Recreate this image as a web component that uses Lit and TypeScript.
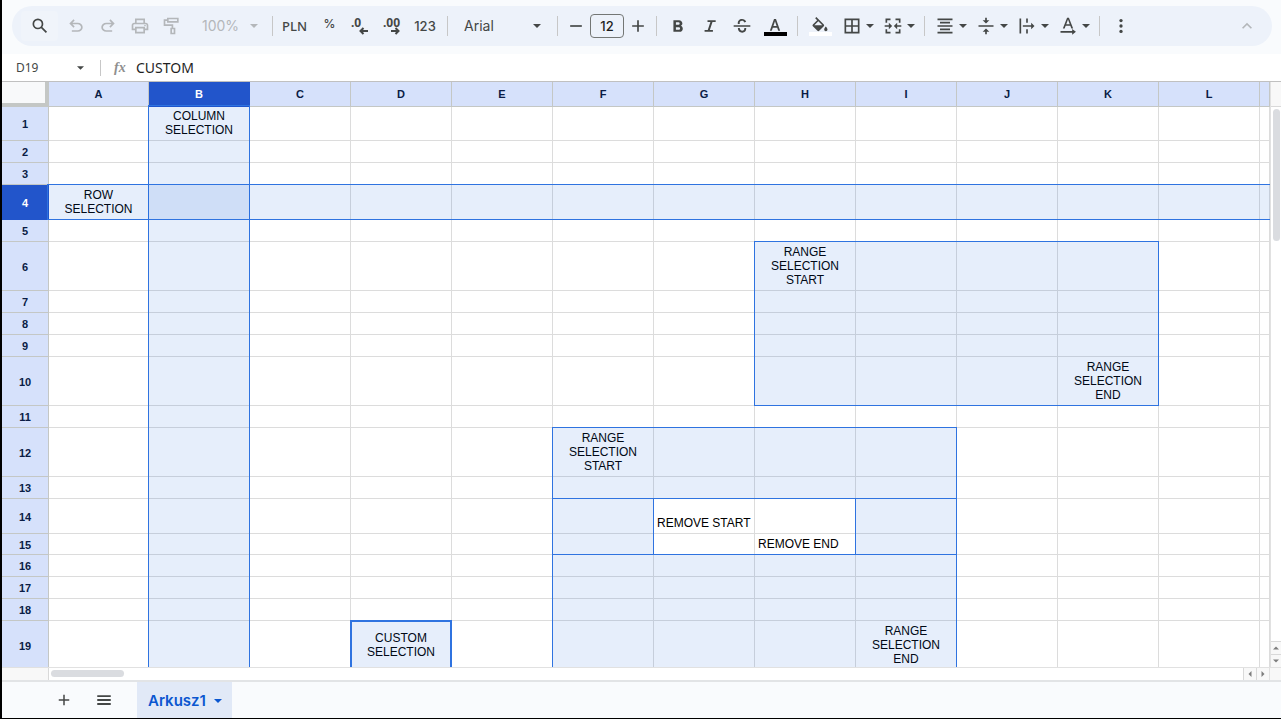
import { LitElement, html, css, svg } from "lit";
import { customElement, state } from "lit/decorators.js";
import { classMap } from "lit/directives/class-map.js";

const COLUMNS = ["A", "B", "C", "D", "E", "F", "G", "H", "I", "J", "K", "L", ""];
const ROW_HEIGHTS = [34, 22, 22, 35, 22, 49, 22, 22, 22, 49, 22, 49, 22, 35, 21, 22, 22, 22, 49];

interface Cell {
  lines: string[];
  look?: string;
}

const CELLS: Record<string, Cell> = {
  B1: { lines: ["COLUMN", "SELECTION"] },
  A4: { lines: ["ROW", "SELECTION"] },
  H6: { lines: ["RANGE", "SELECTION", "START"] },
  K10: { lines: ["RANGE", "SELECTION", "END"] },
  F12: { lines: ["RANGE", "SELECTION", "START"] },
  G14: { lines: ["REMOVE START"], look: "plain" },
  H15: { lines: ["REMOVE END"], look: "plain" },
  D19: { lines: ["CUSTOM", "SELECTION"], look: "middle" },
  I19: { lines: ["RANGE", "SELECTION", "END"] },
};

// Grid lines count the header row and header column as track 1.
interface Range {
  cols: [number, number];
  rows: [number, number];
  kind?: string;
}

const RANGES: Range[] = [
  { cols: [3, 4], rows: [2, 21], kind: "whole-column" },
  { cols: [2, 15], rows: [5, 6], kind: "whole-row" },
  { cols: [9, 13], rows: [7, 12] },
  { cols: [7, 11], rows: [13, 15] },
  { cols: [7, 8], rows: [15, 17] },
  { cols: [10, 11], rows: [15, 17] },
  { cols: [7, 11], rows: [17, 21] },
  { cols: [5, 6], rows: [20, 21], kind: "active" },
];

const SHAPES = {
  search: svg`<path d="M20.49 19l-5.73-5.73C15.53 12.2 16 10.91 16 9.5A6.5 6.5 0 1 0 9.5 16c1.41 0 2.7-.47 3.77-1.24L19 20.49 20.49 19zM5 9.5C5 7.01 7.01 5 9.5 5S14 7.01 14 9.5 11.99 14 9.5 14 5 11.99 5 9.5z"/>`,
  undo: svg`<path d="M7 19v-2h7.1c1.05 0 1.96-.33 2.74-1 .77-.67 1.16-1.5 1.16-2.5s-.39-1.83-1.16-2.5c-.78-.67-1.69-1-2.74-1H7.8l2.6 2.6L9 14 4 9l5-5 1.4 1.4L7.8 8h6.3c1.62 0 3 .53 4.16 1.58C19.42 10.63 20 11.93 20 13.5s-.58 2.88-1.74 3.93C17.1 18.48 15.72 19 14.1 19H7z"/>`,
  redo: svg`<path d="M17 19v-2H9.9c-1.05 0-1.96-.33-2.74-1C6.39 15.33 6 14.5 6 13.5s.39-1.83 1.16-2.5c.78-.67 1.69-1 2.74-1h6.3l-2.6 2.6L15 14l5-5-5-5-1.4 1.4L16.2 8H9.9c-1.62 0-3 .53-4.16 1.58C4.58 10.63 4 11.93 4 13.5s.58 2.88 1.74 3.93C6.9 18.48 8.28 19 9.9 19H17z"/>`,
  print: svg`<path d="M19 8h-1V3H6v5H5c-1.66 0-3 1.34-3 3v6h4v4h12v-4h4v-6c0-1.66-1.34-3-3-3zM8 5h8v3H8V5zm8 14H8v-4h8v4zm2-4v-2H6v2H4v-4c0-.55.45-1 1-1h14c.55 0 1 .45 1 1v4h-2z"/><circle cx="18" cy="11.5" r="1"/>`,
  paint: svg`<path d="M6 2h14v6H6V6H4v4h9.5v4H16v8h-6v-8h1.5v-2H2V4h4V2zm2 2v2h10V4H8zm4 12v4h2v-4h-2z"/>`,
  minus: svg`<path d="M5 11h14v2H5z"/>`,
  plus: svg`<path d="M19 13h-6v6h-2v-6H5v-2h6V5h2v6h6v2z"/>`,
  bold: svg`<path d="M15.6 11.79c.97-.67 1.65-1.77 1.65-2.79 0-2.26-1.75-4-4-4H6.5v14h7.54c2.09 0 3.71-1.7 3.71-3.79 0-1.52-.86-2.82-2.15-3.42zM9.5 7.5h3a1.5 1.5 0 0 1 0 3h-3v-3zm3.5 9H9.5v-3H13a1.5 1.5 0 0 1 0 3z"/>`,
  italic: svg`<path d="M9 5v2.2h3.5L9.3 16.8H5.5V19h10v-2.2h-3.7L15 7.2h3.8V5z"/>`,
  strike: svg`<path d="M2 11h20v2H2zM7 9.5C6.4 5.9 8.9 3.5 12 3.5c2.4 0 4.2 1.2 5 3.3l-2.2.9c-.5-1.3-1.4-2-2.8-2-1.9 0-3.2 1.4-2.7 3.8H7zm0 5h2.3c.2 2 1.3 3.2 3 3.2 1.6 0 2.7-1.2 2.5-3.2h2.3c.2 3.6-1.9 5.6-4.8 5.6-3.2 0-5.2-2.1-5.3-5.6z"/>`,
  textColor: svg`<path d="M10.8 2.5h2.4L18.2 16.5h-2.3l-1.3-3.6H9.4l-1.3 3.6H5.8l5-14zm-.7 8.4h3.8L12 5.2l-1.9 5.7z"/>`,
  fill: svg`<path d="M16.56 8.94L7.62 0 6.21 1.41l2.38 2.38-5.15 5.15a1.49 1.49 0 0 0 0 2.12l5.5 5.5c.29.29.68.44 1.06.44s.77-.15 1.06-.44l5.5-5.5c.59-.58.59-1.53 0-2.12zM5.21 10L10 5.21 14.79 10H5.21zM19 11.5s-2 2.17-2 3.5a2 2 0 0 0 4 0c0-1.33-2-3.5-2-3.5z"/>`,
  borders: svg`<path d="M3 3v18h18V3H3zm8 16H5v-6h6v6zm0-8H5V5h6v6zm8 8h-6v-6h6v6zm0-8h-6V5h6v6z"/>`,
  merge: svg`<path d="M3 3h6v2H5v3H3V3zm12 0h6v5h-2V5h-4V3zM3 16h2v3h4v2H3v-5zm16 0h2v5h-6v-2h4v-3zM2 11h5V8l4 4-4 4v-3H2v-2zm20 0h-5V8l-4 4 4 4v-3h5v-2z"/>`,
  align: svg`<path d="M3 3h18v2H3zM6 7h12v2H6zM3 11h18v2H3zM6 15h12v2H6zM3 19h18v2H3z"/>`,
  valign: svg`<path d="M3 11h18v2H3zM11 2h2v3h3l-4 4-4-4h3V2zm0 20h2v-3h3l-4-4-4 4h3v3z"/>`,
  wrap: svg`<path d="M3 3h2v18H3zM11 3h2v5h-2zM11 16h2v5h-2zM7 11h10V8l4 4-4 4v-3H7v-2z"/>`,
  rotate: svg`<path d="M10.9 2h2.2l5.1 13H16l-1.2-3.2H9.2L8 15H5.8l5.1-13zm-1 7.9h4.2L12 4.2 9.9 9.9zM3 18h14v-2.5l4.5 3.5-4.5 3.5V20H3v-2z"/>`,
  more: svg`<circle cx="12" cy="5.5" r="2"/><circle cx="12" cy="12" r="2"/><circle cx="12" cy="18.5" r="2"/>`,
  collapse: svg`<path d="M12 8l-6 6 1.41 1.41L12 10.83l4.59 4.58L18 14z"/>`,
  list: svg`<path d="M3 5.5h18v2.4H3zM3 10.8h18v2.4H3zM3 16.1h18v2.4H3z"/>`,
};

type ShapeName = keyof typeof SHAPES;

const icon = (name: ShapeName) =>
  html`<svg class="icon" viewBox="0 0 24 24" aria-hidden="true">${SHAPES[name]}</svg>`;

const caret = html`<svg class="caret" viewBox="0 0 8 4" aria-hidden="true"><path d="M0 0h8L4 4z"/></svg>`;

@customElement("sheet-toolbar")
export class SheetToolbar extends LitElement {
  static styles = css`
    :host { display: block; background: #f9fbfd; padding: 6px 9px 8px 10px; }
    .bar {
      display: flex; align-items: center; height: 40px; box-sizing: border-box;
      padding: 0 15px 0 9px; border-radius: 20px; background: #edf2fa; color: #444746;
      font: 500 14px/20px Inter, sans-serif;
    }
    button, select, input { font: inherit; color: inherit; border: 0; background: none; margin: 0; padding: 0; }
    button { display: flex; align-items: center; justify-content: center; flex: none; height: 30px; }
    .tool { width: 32px; }
    .search { width: 37px; margin-right: 2px; background: #f0f4fa; border-radius: 4px; }
    .off { color: #b4b7ba; }
    .icon { width: 20px; height: 20px; fill: currentColor; flex: none; }
    .caret { width: 8px; height: 4px; fill: currentColor; flex: none; }
    .split { width: 41px; gap: 4px; }
    .rule { width: 1px; height: 20px; background: #c7c7c7; flex: none; }
    .rule.wide { margin: 0 5px; }
    .rule.after { margin-right: 5px; }
    .pick { display: flex; align-items: center; flex: none; }
    .pick select { appearance: none; flex: 1; min-width: 0; font-weight: 400; opacity: 1; }
    .zoom { width: 56px; margin: 0 14px; }
    .font { width: 77px; margin: 0 16px; }
    .money { width: 43px; font: 500 13px/20px "Noto Sans", sans-serif; }
    .pct { width: 27px; font-size: 12px; padding-bottom: 4px; }
    .dec { width: 32px; }
    .dec svg { width: 20px; height: 20px; overflow: visible; }
    .dec text { font: 700 12px "Noto Sans", sans-serif; fill: currentColor; }
    .dec path { fill: none; stroke: currentColor; stroke-width: 2; }
    .num { width: 36px; margin-right: 4px; font-size: 13px; }
    .sizes { display: flex; align-items: center; padding: 0 4px; flex: none; }
    .size {
      width: 34px; height: 24px; box-sizing: border-box; border: 1px solid #747775;
      border-radius: 4px; text-align: center; font-size: 13px; color: #1f1f1f;
    }
    .step { width: 28px; }
    .color { flex-direction: column; justify-content: flex-start; width: 34px; padding-top: 6px; }
    .swatch { width: 23px; height: 4px; margin-top: -5px; background: #000; position: relative; }
    .swatch.white { background: #fff; }
    .end { margin-left: auto; }
  `;

  private split(label: string, name: ShapeName) {
    return html`<button class="split" aria-label=${label}>${icon(name)}${caret}</button>`;
  }

  render() {
    return html`
      <div class="bar" role="toolbar" aria-label="Toolbar">
        <button class="search" aria-label="Search">${icon("search")}</button>
        <button class="tool off" aria-label="Undo">${icon("undo")}</button>
        <button class="tool off" aria-label="Redo">${icon("redo")}</button>
        <button class="tool off" aria-label="Print">${icon("print")}</button>
        <button class="tool off" aria-label="Paint format">${icon("paint")}</button>
        <div class="pick zoom off">
          <select aria-label="Zoom" disabled><option>100%</option></select>${caret}
        </div>
        <span class="rule"></span>
        <button class="money">PLN</button>
        <button class="pct">%</button>
        <button class="dec" aria-label="Decrease decimal places">
          <svg viewBox="0 0 20 20"><text x="2" y="11">.0</text><path d="M19 15h-7.5M14.5 12l-3 3 3 3"/></svg>
        </button>
        <button class="dec" aria-label="Increase decimal places">
          <svg viewBox="0 0 20 20"><text x="2" y="11">.00</text><path d="M10 15h7.5M14.5 12l3 3-3 3"/></svg>
        </button>
        <button class="num">123</button>
        <span class="rule"></span>
        <div class="pick font">
          <select aria-label="Font"><option>Arial</option></select>${caret}
        </div>
        <span class="rule"></span>
        <div class="sizes">
          <button class="step" aria-label="Decrease font size">${icon("minus")}</button>
          <input class="size" aria-label="Font size" value="12" />
          <button class="step" aria-label="Increase font size">${icon("plus")}</button>
        </div>
        <span class="rule after"></span>
        <button class="tool" aria-label="Bold">${icon("bold")}</button>
        <button class="tool" aria-label="Italic">${icon("italic")}</button>
        <button class="tool" aria-label="Strikethrough">${icon("strike")}</button>
        <button class="color" aria-label="Text colour">${icon("textColor")}<span class="swatch"></span></button>
        <span class="rule wide"></span>
        <button class="color" aria-label="Fill colour">${icon("fill")}<span class="swatch white"></span></button>
        ${this.split("Borders", "borders")}
        ${this.split("Merge cells", "merge")}
        <span class="rule wide"></span>
        ${this.split("Horizontal align", "align")}
        ${this.split("Vertical align", "valign")}
        ${this.split("Text wrapping", "wrap")}
        ${this.split("Text rotation", "rotate")}
        <span class="rule wide"></span>
        <button class="tool" aria-label="More">${icon("more")}</button>
        <button class="end off" aria-label="Hide the menus">${icon("collapse")}</button>
      </div>
    `;
  }
}

@customElement("formula-bar")
export class FormulaBar extends LitElement {
  static styles = css`
    :host {
      display: flex; align-items: center; height: 27px; background: #fff;
      border-bottom: 1px solid #c0c0c0; font: 14px/20px "Noto Sans", sans-serif; color: #1f1f1f;
    }
    input { font: inherit; color: inherit; border: 0; padding: 0; background: none; min-width: 0; }
    button { border: 0; background: none; padding: 0 4px; display: flex; align-items: center; }
    .name { width: 57px; margin-left: 14px; font-size: 12px; color: #444746; }
    .caret { width: 7px; height: 4px; fill: #444746; }
    .rule { width: 1px; height: 16px; background: #c7c7c7; margin: 0 13px 0 12px; }
    .fx { font: italic bold 14px/16px "Liberation Serif", serif; color: #8f8f8f; width: 22px; }
    .value { flex: 1; }
  `;

  render() {
    return html`
      <input class="name" aria-label="Name box" value="D19" />
      <button aria-label="Named ranges">${caret}</button>
      <span class="rule"></span>
      <span class="fx">fx</span>
      <input class="value" aria-label="Formula" value="CUSTOM" />
    `;
  }
}

@customElement("sheet-grid")
export class SheetGrid extends LitElement {
  static styles = css`
    :host { display: block; position: relative; overflow: hidden; min-width: 0; min-height: 0; background: #fff; }
    table {
      width: 100%; table-layout: fixed; border-collapse: separate; border-spacing: 0;
      font: 12px/14px "Liberation Sans", Arial, sans-serif; color: #000;
    }
    .c-head { width: 47px; }
    .c-first { width: 100px; }
    .c-mid { width: 101px; }
    th, td { box-sizing: border-box; padding: 0; border: 0 solid #dcdcdc; border-width: 0 1px 1px 0; overflow: hidden; }
    th { background: #d6e1fb; border-color: #c4c7c5; color: #0a1c45; font-size: 11px; font-weight: 700; }
    .top th { height: 25px; }
    tbody th { padding-top: 1px; }
    th.on { background: #2255cb; border-color: #2255cb; color: #fff; }
    .corner { background: #f8f9fa; border: solid #c4c7c5; border-width: 0 4px 4px 0; }
    td { text-align: center; vertical-align: bottom; padding-bottom: 3px; }
    .plain { text-align: left; padding-left: 3px; white-space: nowrap; }
    .middle { vertical-align: middle; padding-bottom: 0; }
    .line { display: block; }
    .marks { position: absolute; top: 0; left: 0; right: 0; display: grid; pointer-events: none; }
    .mark {
      margin: -1px 0 0 -1px; border: 1px solid #2f73e0;
      background: rgba(14, 85, 220, 0.1); background-clip: padding-box;
    }
    .whole-row { margin-left: -2px; border-right: 0; }
    .whole-column { margin-top: -2px; }
    .active { border-width: 2px; }
  `;

  private cell(column: string, row: number) {
    const cell = CELLS[column + row];
    if (!column || !cell) return html`<td></td>`;
    return html`<td class=${cell.look ?? "wrapped"}>
      ${cell.lines.map((line) => html`<span class="line">${line}</span>`)}
    </td>`;
  }

  render() {
    const rows = `25px ${ROW_HEIGHTS.map((h) => `${h}px`).join(" ")}`;
    const columns = "47px 100px repeat(11, 101px) 1fr";
    return html`
      <table>
        <colgroup>
          ${["", ...COLUMNS].map((name, i) => html`<col class=${i === 0 ? "c-head" : i === 1 ? "c-first" : name ? "c-mid" : "c-rest"} />`)}
        </colgroup>
        <thead>
          <tr class="top">
            <th class="corner" aria-label="Select all"></th>
            ${COLUMNS.map((name) => html`<th scope="col" class=${classMap({ on: name === "B" })}>${name}</th>`)}
          </tr>
        </thead>
        <tbody>
          ${ROW_HEIGHTS.map((height, i) => html`
            <tr style="height:${height}px">
              <th scope="row" class=${classMap({ on: i === 3 })}>${i + 1}</th>
              ${COLUMNS.map((name) => this.cell(name, i + 1))}
            </tr>`)}
        </tbody>
      </table>
      <div class="marks" style="grid-template-rows:${rows};grid-template-columns:${columns}">
        ${RANGES.map((r) => html`<div
          class="mark ${r.kind ?? ""}"
          style="grid-column:${r.cols[0]}/${r.cols[1]};grid-row:${r.rows[0]}/${r.rows[1]}"
        ></div>`)}
      </div>
    `;
  }
}

@customElement("sheet-tabs")
export class SheetTabs extends LitElement {
  @state() private active = 0;

  static styles = css`
    :host {
      display: flex; align-items: stretch; height: 36px; padding-left: 44px;
      background: #f9fbfd; border-top: 2px solid #e2e4e6; color: #444746;
    }
    button { display: flex; align-items: center; justify-content: center; border: 0; background: none; padding: 0; color: inherit; }
    .tool { width: 36px; }
    .list { margin: 0 15px 0 4px; }
    .icon { width: 18px; height: 18px; fill: currentColor; }
    .caret { width: 8px; height: 4px; fill: currentColor; }
    .tab { gap: 8px; padding: 2px 10px 0 11px; background: #e1e9f7; color: #0b57d0; font: 600 15px/20px Inter, sans-serif; }
  `;

  render() {
    return html`
      <button class="tool" aria-label="Add sheet">${icon("plus")}</button>
      <button class="tool list" aria-label="All sheets">${icon("list")}</button>
      ${["Arkusz1"].map((name, i) => html`
        <button class="tab" aria-pressed=${this.active === i} @click=${() => (this.active = i)}>${name}${caret}</button>`)}
    `;
  }
}

@customElement("app-root")
export class AppRoot extends LitElement {
  static styles = css`
    :host {
      display: flex; flex-direction: column; height: 100vh; box-sizing: border-box; overflow: hidden;
      border: 0 solid #000; border-width: 0 0 1px 2px; background: #fff;
    }
    .sheet { flex: 1; min-height: 0; display: grid; grid-template: minmax(0, 1fr) 13px / minmax(0, 1fr) 11px; }
    .vbar, .hbar { display: flex; }
    .vbar { flex-direction: column; border-left: 1px solid #e1e1e1; }
    .cap { height: 24px; background: #f8f8f8; border-bottom: 1px solid #d9d9d9; }
    .vtrack { flex: 1; padding: 2px 1px 0 2px; }
    .vthumb { height: 132px; border-radius: 4px; background: #dadce0; }
    .hbar { border-top: 1px solid #e1e1e1; padding-right: 1px; }
    .stub { width: 46px; background: #f8f8f8; border-right: 1px solid #d9d9d9; }
    .htrack { flex: 1; padding: 2px; }
    .hthumb { width: 73px; height: 7px; border-radius: 4px; background: #dadce0; }
    .arrow { display: flex; align-items: center; justify-content: center; padding: 0; border: 0 solid #d9d9d9; background: #f8f8f8; }
    .arrow svg { width: 6px; height: 6px; fill: #7d7d7d; }
    .vbar .arrow { height: 13px; border-top-width: 1px; }
    .hbar .arrow { width: 13px; border-left-width: 1px; }
    .nook { margin-left: -1px; background: #f8f8f8; border: solid #e1e1e1; border-width: 1px 0 0 1px; }
  `;

  private arrow(label: string, d: string) {
    return html`<button class="arrow" aria-label=${label}><svg viewBox="0 0 4 4"><path d=${d} /></svg></button>`;
  }

  render() {
    return html`
      <sheet-toolbar></sheet-toolbar>
      <formula-bar></formula-bar>
      <main class="sheet">
        <sheet-grid></sheet-grid>
        <div class="vbar">
          <div class="cap"></div>
          <div class="vtrack"><div class="vthumb"></div></div>
          ${this.arrow("Scroll up", "M0 3l2-2 2 2z")}
          ${this.arrow("Scroll down", "M0 1l2 2 2-2z")}
        </div>
        <div class="hbar">
          <div class="stub"></div>
          <div class="htrack"><div class="hthumb"></div></div>
          ${this.arrow("Scroll left", "M3 0v4L1 2z")}
          ${this.arrow("Scroll right", "M1 0v4l2-2z")}
        </div>
        <div class="nook"></div>
      </main>
      <sheet-tabs></sheet-tabs>
    `;
  }
}
